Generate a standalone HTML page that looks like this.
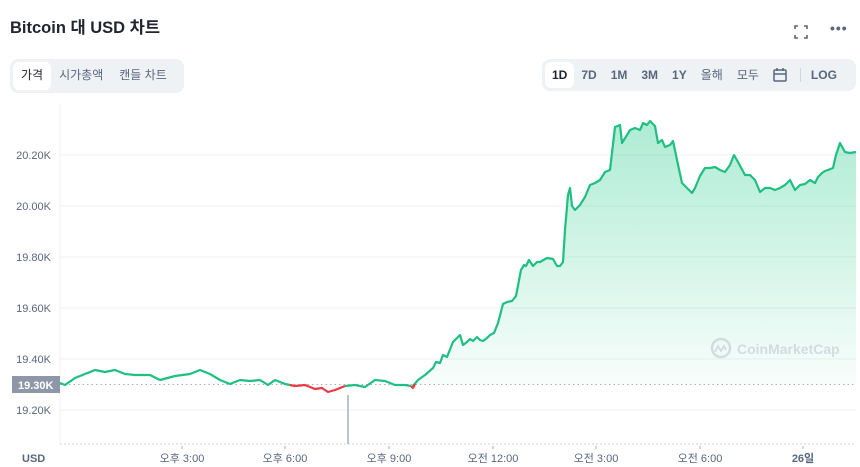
<!DOCTYPE html>
<html><head><meta charset="utf-8"><style>
body{margin:0;width:860px;height:467px;background:#fff;font-family:"Liberation Sans","Noto Sans CJK KR",sans-serif;overflow:hidden;position:relative;color:#222531}
.t{position:absolute;left:10px;top:14px;font-size:16.5px;font-weight:bold;color:#222531}
.seg{position:absolute;background:#eff2f5;border-radius:8px;display:flex;padding:3px;box-sizing:border-box}
.seg div{font-size:12px;color:#58667e;padding:0 8px;line-height:26px;border-radius:6px}
.seg .on{background:#fff;color:#222531}
.r div{font-weight:bold}
</style></head><body>
<div class="t">Bitcoin 대 USD 차트</div>
<svg style="position:absolute;left:793px;top:24px" width="16" height="16" viewBox="0 0 16 16" fill="none" stroke="#58667e" stroke-width="1.6"><path d="M2 5V2h3M11 2h3v3M14 11v3h-3M5 14H2v-3"/></svg>
<div style="position:absolute;left:830px;top:20px;font-size:14px;color:#58667e;letter-spacing:1px;font-weight:bold">•••</div>
<div class="seg" style="left:10px;top:59px;width:174px;height:34px"><div class="on">가격</div><div>시가총액</div><div>캔들 차트</div></div>
<div class="seg r" style="left:542px;top:59px;width:314px;height:32px;align-items:center">
<div class="on" style="padding:0 7px">1D</div><div style="padding:0 7px">7D</div><div style="padding:0 7px">1M</div><div style="padding:0 7px">3M</div><div style="padding:0 7px">1Y</div><div style="padding:0 7px;font-weight:normal">올해</div><div style="padding:0 7px;font-weight:normal">모두</div>
<svg width="16" height="16" viewBox="0 0 16 16" style="margin:0 6px" fill="none" stroke="#58667e" stroke-width="1.5"><rect x="2" y="3" width="12" height="11" rx="1"/><path d="M2 7h12M5 1v3M11 1v3"/></svg>
<span style="width:1px;height:14px;background:#cfd6e4;margin:0 6px"></span><div style="padding:0 4px">LOG</div></div>
<svg style="position:absolute;left:0;top:0" width="860" height="467">
<defs><linearGradient id="g" x1="0" y1="120" x2="0" y2="384" gradientUnits="userSpaceOnUse"><stop offset="0" stop-color="#16c784" stop-opacity="0.35"/><stop offset="1" stop-color="#16c784" stop-opacity="0.03"/></linearGradient></defs>
<g stroke="#eff2f5" stroke-width="1"><path d="M60 155H856M60 206H856M60 257H856M60 308H856M60 359H856M60 410H856"/></g>
<path d="M60 104V444" stroke="#eff2f5"/>
<path d="M60 444H856" stroke="#cfd6e4" stroke-dasharray="2 2"/>
<path d="M60 384.5H856" stroke="#a6b0c3" stroke-dasharray="1.5 3"/>
<path d="M348 395V444" stroke="#a6b0c3" stroke-width="1.5"/>
<path fill="url(#g)" d="M413 384 L418 380 L425 375 L433 368 L436 362 L440 363 L443 355 L447 357 L453 342 L457 338 L460 335 L463 345 L467 342 L470 339 L473 341 L477 337 L480 340 L483 341 L487 338 L490 335 L494 333 L498 323 L503 304 L507 302 L512 301 L516 296 L521 270 L524 265 L526 266 L529 260 L533 266 L537 262 L540 262 L547 258 L553 259 L557 266 L560 266 L563 262 L565 230 L568 195 L570 188 L572 206 L575 210 L580 205 L585 197 L590 185 L595 183 L600 180 L605 172 L610 170 L615 127 L620 125 L622 143 L627 135 L630 130 L635 128 L640 130 L643 123 L647 125 L650 121 L655 126 L658 143 L662 140 L665 147 L670 145 L673 141 L677 160 L682 183 L687 188 L692 193 L695 188 L700 176 L705 168 L710 168 L715 167 L720 170 L725 172 L730 165 L734 155 L738 162 L745 175 L750 175 L755 180 L760 192 L765 188 L770 188 L775 190 L780 188 L785 185 L790 180 L795 190 L800 185 L805 184 L810 180 L815 183 L818 177 L822 173 L825 171 L828 170 L833 168 L836 155 L840 143 L845 152 L850 153 L856 152 V384 Z"/>
<path fill="none" stroke="#1fbf83" stroke-width="2.2" stroke-linejoin="round" d="M60 383 L65 385 L75 378 L85 374 L95 370 L105 372 L115 370 L125 374 L135 375 L150 375 L160 380 L175 376 L190 374 L200 370 L210 374 L220 380 L230 384 L240 380 L250 381 L260 380 L268 385 L275 380 L285 384 L290 385 M345 386 L355 385 L365 387 L375 380 L385 381 L395 385 L405 385 L411 386 M413 386 L418 380 L425 375 L433 368 L436 362 L440 363 L443 355 L447 357 L453 342 L457 338 L460 335 L463 345 L467 342 L470 339 L473 341 L477 337 L480 340 L483 341 L487 338 L490 335 L494 333 L498 323 L503 304 L507 302 L512 301 L516 296 L521 270 L524 265 L526 266 L529 260 L533 266 L537 262 L540 262 L547 258 L553 259 L557 266 L560 266 L563 262 L565 230 L568 195 L570 188 L572 206 L575 210 L580 205 L585 197 L590 185 L595 183 L600 180 L605 172 L610 170 L615 127 L620 125 L622 143 L627 135 L630 130 L635 128 L640 130 L643 123 L647 125 L650 121 L655 126 L658 143 L662 140 L665 147 L670 145 L673 141 L677 160 L682 183 L687 188 L692 193 L695 188 L700 176 L705 168 L710 168 L715 167 L720 170 L725 172 L730 165 L734 155 L738 162 L745 175 L750 175 L755 180 L760 192 L765 188 L770 188 L775 190 L780 188 L785 185 L790 180 L795 190 L800 185 L805 184 L810 180 L815 183 L818 177 L822 173 L825 171 L828 170 L833 168 L836 155 L840 143 L845 152 L850 153 L856 152"/>
<path fill="none" stroke="#ea3943" stroke-width="2.2" stroke-linejoin="round" d="M290 385 L295 386 L305 385 L315 389 L322 388 L328 392 L335 390 L345 386 M411 386 L413 388 L415 384"/>
<g font-size="11" fill="#58667e" font-family="Liberation Sans,sans-serif"><text x="51" y="159" text-anchor="end">20.20K</text><text x="51" y="210" text-anchor="end">20.00K</text><text x="51" y="261" text-anchor="end">19.80K</text><text x="51" y="312" text-anchor="end">19.60K</text><text x="51" y="363" text-anchor="end">19.40K</text><text x="51" y="414" text-anchor="end">19.20K</text></g>
<rect x="12" y="376" width="48" height="17" fill="#8e97a7"/>
<text x="18" y="389" font-size="11" fill="#fff" font-weight="bold" font-family="Liberation Sans,sans-serif">19.30K</text>
<text x="22" y="462" font-size="11" fill="#58667e" font-weight="bold" font-family="Liberation Sans,sans-serif">USD</text>
<g font-size="11" fill="#58667e" text-anchor="middle" font-family="Liberation Sans,Noto Sans CJK KR,sans-serif"><text x="182" y="462">오후 3:00</text><text x="285" y="462">오후 6:00</text><text x="389" y="462">오후 9:00</text><text x="493" y="462">오전 12:00</text><text x="596" y="462">오전 3:00</text><text x="700" y="462">오전 6:00</text><text x="803" y="462" font-weight="bold">26일</text></g>
<g stroke="#a6b0c3"><path d="M182 446v3M285 446v3M389 446v3M493 446v3M596 446v3M700 446v3M803 446v3"/></g>
<g opacity="0.4"><circle cx="721" cy="348" r="9" fill="none" stroke="#a6b0c3" stroke-width="2.5"/><path d="M715 352l3-6 3 5 3-5 2 4" fill="none" stroke="#a6b0c3" stroke-width="1.8"/>
<text x="737" y="354" font-size="14" font-weight="bold" fill="#a6b0c3" font-family="Liberation Sans,sans-serif">CoinMarketCap</text></g>
</svg>
</body></html>
